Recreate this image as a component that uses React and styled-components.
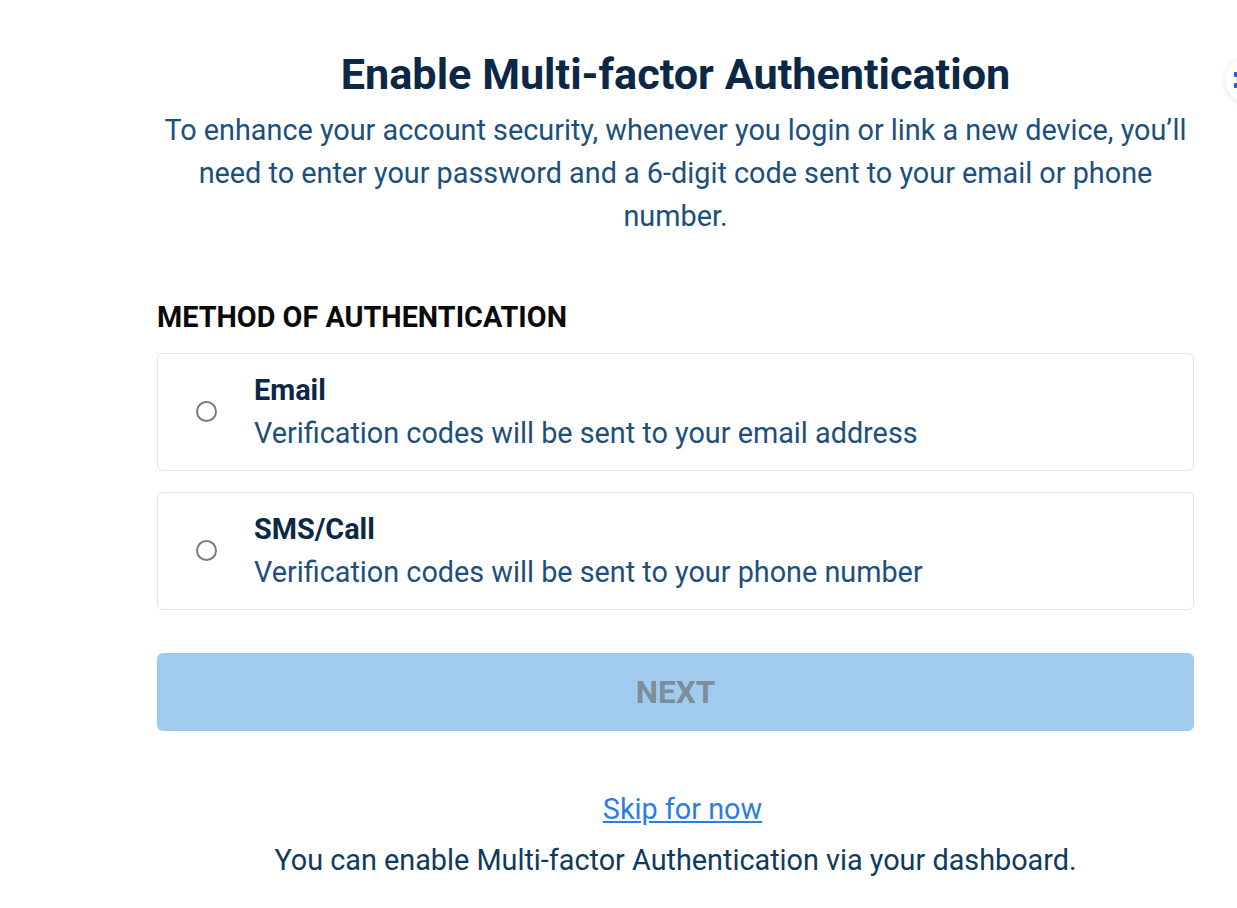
import styled, { createGlobalStyle } from "styled-components";

const GlobalStyle = createGlobalStyle`
  html, body {
    margin: 0;
    padding: 0;
    background: #ffffff;
    font-family: Roboto, "Liberation Sans", Arial, sans-serif;
  }
`;

const Page = styled.div`
  position: relative;
  width: 1237px;
  min-height: 908px;
  overflow: hidden;
`;

const Content = styled.main`
  width: 1037px;
  margin-left: 157px;
  padding-top: 49px;
  display: flex;
  flex-direction: column;
`;

const Title = styled.h1`
  margin: 0;
  text-align: center;
  font-size: 43.2px;
  line-height: 52px;
  font-weight: 700;
  color: #0b2847;
`;

const Intro = styled.p`
  margin: 8px 0 0;
  text-align: center;
  font-size: 28.8px;
  line-height: 43px;
  color: #1d4f7c;
`;

const SectionLabel = styled.h2`
  margin: 62px 0 0;
  font-size: 28.8px;
  line-height: 34px;
  font-weight: 700;
  color: #0a0a0a;
`;

const Options = styled.div`
  margin-top: 19px;
  display: flex;
  flex-direction: column;
  gap: 21px;
`;

const OptionCard = styled.label`
  box-sizing: border-box;
  height: 118px;
  border: 1px solid #e2e2e2;
  border-radius: 6px;
  display: flex;
  align-items: center;
  padding-left: 38px;
  gap: 37px;
  cursor: pointer;
`;

const Radio = styled.span`
  box-sizing: border-box;
  width: 21px;
  height: 21px;
  border-radius: 50%;
  border: 2px solid #7a7a7a;
  flex-shrink: 0;
  margin-top: -2px;
`;

const OptionText = styled.div`
  display: flex;
  flex-direction: column;
`;

const OptionTitle = styled.span`
  font-size: 28.8px;
  line-height: 43px;
  font-weight: 700;
  color: #0b2847;
`;

const OptionDesc = styled.span`
  font-size: 28.8px;
  line-height: 43px;
  color: #1d4f7c;
`;

const NextButton = styled.button`
  margin-top: 43px;
  height: 78px;
  border: none;
  border-radius: 6px;
  background: #a1cbee;
  color: #7d8d9b;
  font-family: inherit;
  font-size: 31.5px;
  font-weight: 700;
`;

const SkipLink = styled.a`
  margin: 58px auto 0;
  font-size: 28.8px;
  line-height: 40px;
  color: #2b7de0;
  text-decoration: underline;
  transform: translateX(7px);
`;

const Footnote = styled.p`
  margin: 11px 0 0;
  text-align: center;
  font-size: 28.8px;
  line-height: 40px;
  color: #0f3a5e;
`;

const FloatingButton = styled.div`
  position: absolute;
  left: 1225px;
  top: 58px;
  width: 44px;
  height: 44px;
  border-radius: 50%;
  background: #ffffff;
  box-shadow: 0 1px 6px rgba(0, 0, 0, 0.12);
`;

function FloatIcon() {
  return (
    <svg width="44" height="44" viewBox="0 0 44 44" style={{ display: "block" }}>
      <rect x="9" y="14" width="6" height="5" rx="1" fill="#1a5fd0" />
      <rect x="9" y="25" width="6" height="5" rx="1" fill="#1a5fd0" />
    </svg>
  );
}

const methods = [
  { id: "email", title: "Email", desc: "Verification codes will be sent to your email address" },
  { id: "sms", title: "SMS/Call", desc: "Verification codes will be sent to your phone number" },
];

export default function App() {
  return (
    <Page>
      <GlobalStyle />
      <Content>
        <Title>Enable Multi-factor Authentication</Title>
        <Intro>
          To enhance your account security, whenever you login or link a new device, you’ll
          need to enter your password and a 6-digit code sent to your email or phone
          number.
        </Intro>
        <SectionLabel>METHOD OF AUTHENTICATION</SectionLabel>
        <Options>
          {methods.map((m) => (
            <OptionCard key={m.id}>
              <Radio />
              <OptionText>
                <OptionTitle>{m.title}</OptionTitle>
                <OptionDesc>{m.desc}</OptionDesc>
              </OptionText>
            </OptionCard>
          ))}
        </Options>
        <NextButton disabled>NEXT</NextButton>
        <SkipLink href="#">Skip for now</SkipLink>
        <Footnote>You can enable Multi-factor Authentication via your dashboard.</Footnote>
      </Content>
      <FloatingButton>
        <FloatIcon />
      </FloatingButton>
    </Page>
  );
}
